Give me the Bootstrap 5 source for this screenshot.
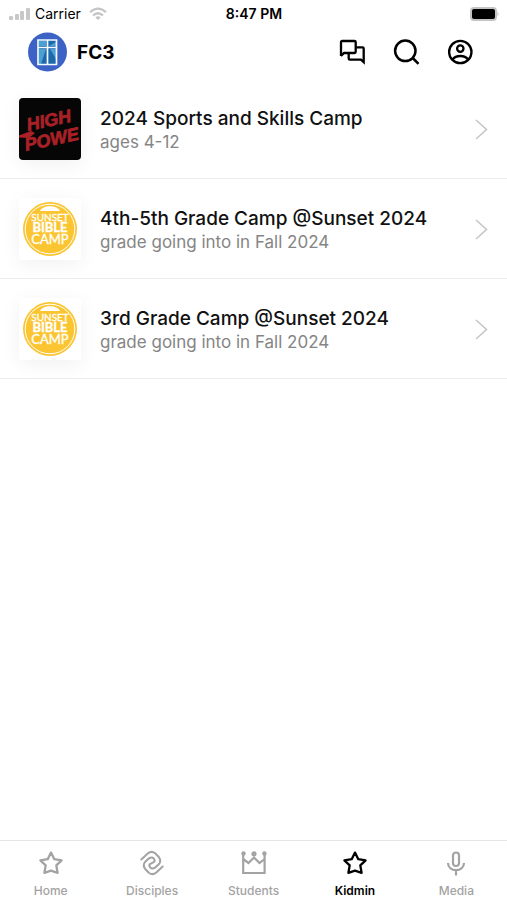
<!DOCTYPE html>
<html lang="en">
<head>
<meta charset="utf-8">
<meta name="viewport" content="width=device-width, initial-scale=1">
<title>FC3 Kidmin</title>
<link href="https://cdn.jsdelivr.net/npm/bootstrap@5.3.0/dist/css/bootstrap.min.css" rel="stylesheet">
<style>
  body { font-family: Inter, "Liberation Sans", sans-serif; color: #000; background: #fff; }
  svg { display: block; flex: none; }
  .status-bar { height: 28px; padding: 0 8px 0 9px; font-size: 14px; line-height: 20px; }
  .status-side { flex: 1 1 0; }
  .app-header { height: 52px; padding: 0 33px 4px 27px; }
  .brand { gap: 10px; }
  .brand-name { font-size: 19px; line-height: 24px; font-weight: 700; padding-top: 2px; }
  .tool-group { gap: 26px; }
  .tool-group .btn { color: #000; }
  .camp-item { height: 100px; padding: 0 18px 0 19px; gap: 19px; border-bottom: 1px solid #ececec; color: #111; }
  .camp-item:first-child { height: 99px; }
  .camp-text { padding-top: 2px; }
  .thumb { width: 62px; height: 62px; border-radius: 4px; box-shadow: 0 4px 20px rgba(0, 0, 0, .06); overflow: hidden; }
  .camp-title { font-size: 19px; line-height: 24px; font-weight: 500; }
  .camp-note { font-size: 17px; line-height: 22px; color: #858585; }
  .tab-bar { height: 60px; border-top: 1px solid #e6e6e6; padding-top: 8px; }
  .tab-item { color: #a3a3a3; font-size: 12px; line-height: 16px; font-weight: 500; gap: 6px; }
  .tab-item.active { color: #000; font-weight: 600; }
</style>
<script defer src="https://cdn.jsdelivr.net/npm/bootstrap@5.3.0/dist/js/bootstrap.bundle.min.js"></script>
</head>
<body>
<svg width="0" height="0" class="position-absolute" aria-hidden="true">
  <symbol id="star" viewBox="0 0 26 28"><path d="M13 3.600l3.300 6.600 7.300 1.100-5.300 5.100 1.300 7.400-6.600-2.200-6.600 2.200 1.300-7.400-5.300-5.100 7.300-1.100z" fill="none" stroke="currentColor" stroke-width="2.300" stroke-linejoin="round"/></symbol>
  <symbol id="chevron" viewBox="0 0 16 24"><path d="M3 3l10.500 9.500L3 22" fill="none" stroke="#c6c6c6" stroke-width="1.600"/></symbol>
  <symbol id="sunset" viewBox="0 0 62 62">
    <rect width="62" height="62" fill="#fff"/>
    <circle cx="31" cy="31" r="27" fill="#fbc531"/>
    <circle cx="31" cy="31" r="24.800" fill="none" stroke="#fff" stroke-width="1"/>
    <path d="M21 13C23 6.500 39 6.500 41 13z" fill="#fff"/>
    <g fill="#fff" stroke="#fff" stroke-width=".3" text-anchor="middle" font-family="Lato, sans-serif">
      <text x="31" y="23" font-size="10">SUNSET</text>
      <text x="31" y="34" font-size="13" font-weight="700">BIBLE</text>
      <text x="31" y="46" font-size="13">CAMP</text>
    </g>
  </symbol>
</svg>

<div class="min-vh-100 d-flex flex-column">
  <div class="status-bar d-flex align-items-center">
    <div class="status-side d-flex align-items-center gap-1">
      <svg width="22" height="14" viewBox="0 0 22 14" fill="#c8c8c8" aria-hidden="true"><rect y="9" width="4" height="4" rx="1"/><rect x="6" y="7" width="4" height="6" rx="1"/><rect x="11" y="4" width="4" height="9" rx="1"/><rect x="17" y="1" width="4" height="12" rx="1"/></svg>
      <span>Carrier</span>
      <svg class="ms-1" width="18" height="14" viewBox="0 0 18 14" fill="none" stroke="#c5c5c5" stroke-width="2.200" aria-hidden="true"><path d="M1 5.200Q9-2 17 5.200M4 8.500Q9 4 14 8.500"/><path d="M6.300 10.400Q9 8.200 11.700 10.400L9 13z" fill="#c5c5c5" stroke="none"/></svg>
    </div>
    <span class="fw-semibold">8:47 PM</span>
    <div class="status-side d-flex justify-content-end">
      <svg width="30" height="14" viewBox="0 0 30 14" aria-label="Battery full" role="img"><rect x="1" width="27" height="14" rx="4" fill="#c4c4c4"/><path d="M28.500 4.500q2 2.500 0 5z" fill="#bbb"/><rect x="3" y="2" width="23" height="10" rx="2" fill="#000"/></svg>
    </div>
  </div>

  <header class="app-header d-flex align-items-center justify-content-between">
    <div class="brand d-flex align-items-center">
      <svg width="40" height="40" viewBox="0 0 40 40" aria-hidden="true"><circle cx="20.500" cy="20" r="19.500" fill="#3d62c6"/><rect x="11" y="7.500" width="19" height="25" fill="#1d68aa"/><path d="M12 9h7v5h-7zM22 14h7v-4zM12 17h7l-5 15h-2zM23 17h6v10z" fill="#4b9fd4"/><path d="M11 8h18.500v24.500H11zM20.500 8v24.500M11 15.500h18.500" fill="none" stroke="#f4f8ff" stroke-width="1.700"/></svg>
      <span class="brand-name">FC3</span>
    </div>
    <div class="tool-group d-flex">
      <button type="button" class="btn p-0 border-0" aria-label="Messages"><svg width="28" height="28" viewBox="0 0 28 28" fill="none" stroke="currentColor" stroke-width="2.300"><path d="M3 18V4.200Q3 3 4.200 3H16.500Q17.700 3 17.700 4.200V13.800Q17.700 15 16.500 15H6L3 18"/><path d="M17.700 9.300H24.500Q25.700 9.300 25.700 10.500V24.200L22.900 21.600H11.900Q10.700 21.600 10.700 20.400V15"/></svg></button>
      <button type="button" class="btn p-0 border-0" aria-label="Search"><svg width="28" height="28" viewBox="0 0 28 28" fill="none" stroke="currentColor" stroke-width="2.500"><circle cx="13.300" cy="12.800" r="10.200"/><path d="M20.700 20l5.800 5.800"/></svg></button>
      <button type="button" class="btn p-0 border-0" aria-label="Account"><svg width="28" height="28" viewBox="0 0 28 28" fill="none" stroke="currentColor" stroke-width="2.300"><circle cx="14.300" cy="14" r="11.200"/><circle cx="14.300" cy="10.600" r="3.200"/><path d="M6.500 21.600C9.800 16.800 18.800 16.800 22.100 21.600"/></svg></button>
    </div>
  </header>

  <main class="flex-grow-1">
    <a href="#sports" class="camp-item d-flex align-items-center text-decoration-none">
      <svg class="thumb" viewBox="0 0 62 62" role="img" aria-label="High Power">
        <rect width="62" height="62" fill="#070606"/>
        <g fill="#a92127" stroke="#a92127" stroke-width=".7" font-family="'Liberation Sans', sans-serif" font-weight="700" font-style="italic">
          <text transform="translate(9 33) rotate(-12)" font-size="18">HIGH</text>
          <text transform="translate(7 53) rotate(-12)" font-size="18">POWE</text>
        </g>
        <path d="M0 37.500L12 33 16 35 10 40 0 39.500z" fill="#a92127"/>
      </svg>
      <div class="camp-text flex-grow-1">
        <div class="camp-title">2024 Sports and Skills Camp</div>
        <div class="camp-note">ages 4-12</div>
      </div>
      <svg width="16" height="24"><use href="#chevron"/></svg>
    </a>
    <a href="#sunset-4-5" class="camp-item d-flex align-items-center text-decoration-none">
      <svg class="thumb" role="img" aria-label="Sunset Bible Camp"><use href="#sunset"/></svg>
      <div class="camp-text flex-grow-1">
        <div class="camp-title">4th-5th Grade Camp @Sunset 2024</div>
        <div class="camp-note">grade going into in Fall 2024</div>
      </div>
      <svg width="16" height="24"><use href="#chevron"/></svg>
    </a>
    <a href="#sunset-3" class="camp-item d-flex align-items-center text-decoration-none">
      <svg class="thumb" role="img" aria-label="Sunset Bible Camp"><use href="#sunset"/></svg>
      <div class="camp-text flex-grow-1">
        <div class="camp-title">3rd Grade Camp @Sunset 2024</div>
        <div class="camp-note">grade going into in Fall 2024</div>
      </div>
      <svg width="16" height="24"><use href="#chevron"/></svg>
    </a>
  </main>

  <nav class="tab-bar d-flex sticky-bottom bg-white" aria-label="Sections">
    <a href="#home" class="tab-item col d-flex flex-column align-items-center text-decoration-none"><svg width="26" height="28"><use href="#star"/></svg>Home</a>
    <a href="#disciples" class="tab-item col d-flex flex-column align-items-center text-decoration-none"><svg width="26" height="28" viewBox="0 0 26 28" fill="none" stroke="currentColor" stroke-width="2" stroke-linecap="round" stroke-linejoin="round"><path d="M2.300 10.500L9 4.300Q12.500 1.500 16.200 4.300L20 8.300Q22.500 11.700 20 15L16 18.700Q13.300 20.500 11.200 18.500 9.500 16.300 11.300 14.800L14.700 13.200Q16.500 11.700 14.800 9.500 12.700 7.500 10 9.300L6 13Q3.500 16.300 6 19.700L9.800 23.700Q13.500 26.500 17 23.700L23.700 17.500"/></svg>Disciples</a>
    <a href="#students" class="tab-item col d-flex flex-column align-items-center text-decoration-none"><svg width="26" height="28" viewBox="0 0 26 28" fill="none" stroke="currentColor" stroke-width="2.200"><path d="M2.200 6V24H23.600V6M2.200 10L7.500 14 13 8.500 18.500 14 23.600 10"/><g fill="currentColor" stroke="none"><circle cx="2.500" cy="4.500" r="2.200"/><circle cx="13" cy="4.800" r="2.600"/><circle cx="23.400" cy="4.500" r="2.200"/></g></svg>Students</a>
    <a href="#kidmin" class="tab-item active col d-flex flex-column align-items-center text-decoration-none" aria-current="page"><svg width="26" height="28"><use href="#star"/></svg>Kidmin</a>
    <a href="#media" class="tab-item col d-flex flex-column align-items-center text-decoration-none"><svg width="26" height="28" viewBox="0 0 26 28" fill="none" stroke="currentColor" stroke-width="2.200"><rect x="10" y="3.500" width="6" height="13.500" rx="3"/><path d="M5 14C5 23.500 21 23.500 21 14M13 21V26.500"/></svg>Media</a>
  </nav>
</div>
</body>
</html>
